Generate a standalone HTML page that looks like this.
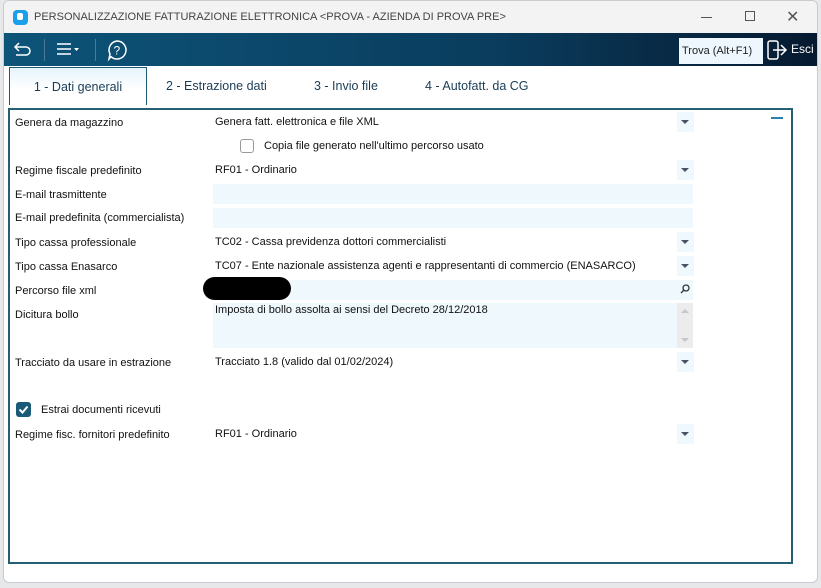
<!DOCTYPE html>
<html><head><meta charset="utf-8"><style>
*{box-sizing:border-box;margin:0;padding:0}
body{width:821px;height:588px;background:#e6e8ea;font-family:"Liberation Sans",sans-serif;font-size:11px;color:#111;position:relative;overflow:hidden;white-space:nowrap}
.win{position:absolute;left:3px;top:0;width:815px;height:583px;background:#fff;border:1px solid #c8ccd0;border-radius:6px;overflow:hidden}
.title{position:absolute;left:0;top:0;width:100%;height:32px;background:#f3f3f3;}
.title .t{position:absolute;left:30px;top:10px;font-size:11px;color:#444}
.logo{position:absolute;left:9px;top:9px;width:15px;height:15px;background:#1aa0e8;border-radius:4px}
.logo:after{content:"";position:absolute;left:4px;top:3px;width:6px;height:7px;background:#fff;border-radius:2px}
.tb{position:absolute;left:0;top:32px;width:100%;height:33px;background:linear-gradient(90deg,#0d5479,#0a3d5e 60%,#061a30)}
.sep{position:absolute;top:6px;width:1px;height:22px;background:#4a7a98}
.trova{position:absolute;left:675px;top:5px;width:84px;height:26px;background:#eef7fd;color:#222;font-size:11px;padding:7px 0 0 3px}
.esci{position:absolute;left:787px;top:9px;color:#fff;font-size:12px}
.tabs{position:absolute;top:66px;left:0;width:100%;height:38px}
.tab{position:absolute;top:0;height:38px;padding-top:12px;font-size:12.5px;color:#1a3d57}
.tab.a{left:5px;width:138px;text-align:center;border:1px solid #1d5a70;border-bottom:none;background:linear-gradient(#e6f4fc,#fff 60%)}
.panel{position:absolute;left:8px;top:108px;width:785px;height:456px;border:2px solid #245f72}
.lbl{position:absolute;left:11px}
.val{position:absolute;left:211px}
.fld{position:absolute;left:209px;width:481px;height:20px;background:#eff8fd}
.dd{position:absolute;left:673px;width:17px;height:20px;background:#eff8fd}
.dd:after{content:"";position:absolute;left:4px;top:8px;border-left:4px solid transparent;border-right:4px solid transparent;border-top:4px solid #4a5468}
</style></head><body>
<div class="win">
<div class="title"><div class="logo"></div><div class="t">PERSONALIZZAZIONE FATTURAZIONE ELETTRONICA &lt;PROVA - AZIENDA DI PROVA PRE&gt;</div>
<div style="position:absolute;left:697px;top:16px;width:11px;height:1px;background:#555"></div>
<div style="position:absolute;left:741px;top:10px;width:10px;height:10px;border:1px solid #555"></div>
<div style="position:absolute;left:782px;top:6px;font-size:16px;color:#555">✕</div>
</div>
<div class="tb">
<svg style="position:absolute;left:9px;top:7px" width="20" height="20" viewBox="0 0 20 20" fill="none" stroke="#fff" stroke-width="1.5"><path d="M6 3 L2 7 L6 11"/><path d="M2 7 H13 a4 4 0 0 1 0 8 H3"/></svg>
<div class="sep" style="left:40px"></div>
<svg style="position:absolute;left:52px;top:9px" width="24" height="16" stroke="#fff" stroke-width="1.5"><path d="M1 2H15M1 7H15M1 12H15"/><polygon points="18,6 23,6 20.5,9" fill="#fff" stroke="none"/></svg>
<div class="sep" style="left:91px"></div>
<svg style="position:absolute;left:101px;top:5px" width="24" height="24" viewBox="0 0 24 24" fill="none" stroke="#fff" stroke-width="1.5"><path d="M12 3a9 9 0 1 1 -6 15.7 L4 21 L5 16 A9 9 0 0 1 12 3Z"/><text x="8.5" y="16.5" fill="#fff" stroke="none" font-size="12" font-family="Liberation Sans">?</text></svg>
<div class="trova">Trova (Alt+F1)</div>
<svg style="position:absolute;left:763px;top:7px" width="22" height="20" fill="none" stroke="#fff" stroke-width="1.5"><rect x="1" y="1" width="10" height="18" rx="2"/><path d="M6 10H19M14 5l5 5-5 5"/></svg>
<div class="esci">Esci</div>
</div>
<div class="tabs">
<div class="tab a">1 - Dati generali</div>
<div class="tab" style="left:162px">2 - Estrazione dati</div>
<div class="tab" style="left:310px">3 - Invio file</div>
<div class="tab" style="left:421px">4 - Autofatt. da CG</div>
</div>
<div style="position:absolute;left:767px;top:116px;width:12px;height:2px;background:#2a80b0"></div>
</div>
<div class="panel"></div>
<div style="position:absolute;left:0;top:0;width:821px;height:588px">
<div class="lbl" style="top:117px;left:15px">Genera da magazzino</div><div class="val" style="top:116px;left:215px">Genera fatt. elettronica e file XML</div><div class="dd" style="top:112px;left:677px"></div>
<div style="position:absolute;left:240px;top:139px;width:14px;height:14px;border:1px solid #999;border-radius:3px"></div><div style="position:absolute;left:264px;top:140px">Copia file generato nell'ultimo percorso usato</div>
<div class="lbl" style="top:165px;left:15px">Regime fiscale predefinito</div><div class="val" style="top:164px;left:215px">RF01 - Ordinario</div><div class="dd" style="top:160px;left:677px"></div>
<div class="lbl" style="top:189px;left:15px">E-mail trasmittente</div><div class="fld" style="top:184px;left:213px;width:480px"></div>
<div class="lbl" style="top:212px;left:15px">E-mail predefinita (commercialista)</div><div class="fld" style="top:208px;left:213px;width:480px"></div>
<div class="lbl" style="top:237px;left:15px">Tipo cassa professionale</div><div class="val" style="top:236px;left:215px">TC02 - Cassa previdenza dottori commercialisti</div><div class="dd" style="top:232px;left:677px"></div>
<div class="lbl" style="top:261px;left:15px">Tipo cassa Enasarco</div><div class="val" style="top:260px;left:215px">TC07 - Ente nazionale assistenza agenti e rappresentanti di commercio (ENASARCO)</div><div class="dd" style="top:256px;left:677px"></div>
<div class="lbl" style="top:285px;left:15px">Percorso file xml</div><div class="fld" style="top:280px;left:213px;width:480px"></div>
<div style="position:absolute;left:203px;top:277px;width:88px;height:23px;background:#000;border-radius:12px"></div>
<svg style="position:absolute;left:680px;top:284px" width="10" height="10" fill="none" stroke="#333" stroke-width="1.3"><circle cx="6" cy="4" r="3"/><path d="M4 6L1 9"/></svg>
<div class="lbl" style="top:309px;left:15px">Dicitura bollo</div><div class="fld" style="top:303px;left:213px;width:464px;height:45px"></div><div style="position:absolute;left:677px;top:303px;width:16px;height:45px;background:#ececec"></div>
<div style="position:absolute;left:681px;top:309px;border-left:4px solid transparent;border-right:4px solid transparent;border-bottom:4px solid #c3c6cc"></div>
<div style="position:absolute;left:681px;top:338px;border-left:4px solid transparent;border-right:4px solid transparent;border-top:4px solid #c3c6cc"></div>
<div class="val" style="top:304px;left:215px">Imposta di bollo assolta ai sensi del Decreto 28/12/2018</div>
<div class="lbl" style="top:357px;left:15px">Tracciato da usare in estrazione</div><div class="val" style="top:356px;left:215px">Tracciato 1.8 (valido dal 01/02/2024)</div><div class="dd" style="top:352px;left:677px"></div>
<div style="position:absolute;left:16px;top:402px;width:15px;height:15px;background:#1a5a78;border-radius:3px"></div>
<svg style="position:absolute;left:16px;top:402px" width="15" height="15" fill="none" stroke="#fff" stroke-width="2"><path d="M3.5 7.5l3 3 5-6"/></svg>
<div style="position:absolute;left:41px;top:404px">Estrai documenti ricevuti</div>
<div class="lbl" style="top:429px;left:15px">Regime fisc. fornitori predefinito</div><div class="val" style="top:428px;left:215px">RF01 - Ordinario</div><div class="dd" style="top:424px;left:677px"></div>
</div>
</body></html>
